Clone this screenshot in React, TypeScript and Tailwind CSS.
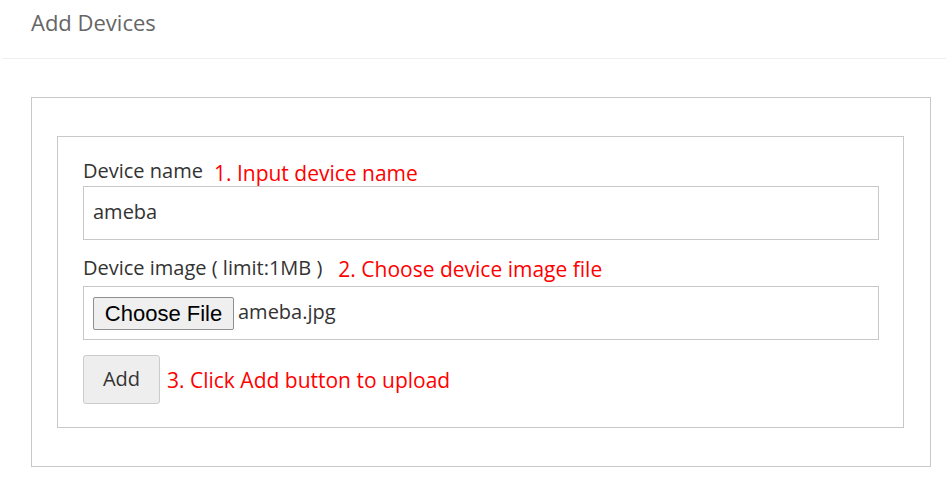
import React from "react";

export default function App() {
  const main = { fontFamily: "'Open Sans', 'Noto Sans', sans-serif" };
  return (
    <div className="w-[946px] h-[479px] bg-white overflow-hidden" style={main}>
      <div className="h-[59px] ml-[3px] border-b border-[#eeeeee] pl-[28px] pt-[7px]">
        <h1 className="text-[22px] leading-[30px] text-[#666666]">Add Devices</h1>
      </div>
      <div className="ml-[31px] mt-[38px] w-[900px] h-[370px] border border-[#c8c8c8] pt-[38px] pl-[25px]">
        <div className="w-[847px] h-[292px] border border-[#c8c8c8] pl-[25px] pt-[20px]">
          <div className="flex items-end h-[29px]">
            <span className="text-[20px] leading-[26px] text-[#333333] -translate-y-[2px]">Device name</span>
            <span className="ml-[11px] text-[21px] leading-[26px] text-[#ff0000]">1. Input device name</span>
          </div>
          <div className="w-[796px] h-[54px] border border-[#c8c8c8] flex items-center pl-[9px]">
            <span className="text-[20px] text-[#333333] -translate-y-[1px]">ameba</span>
          </div>
          <div className="flex items-end h-[46px] pb-[4px]">
            <span className="text-[20px] leading-[26px] text-[#333333] -translate-y-[1px]">Device image ( limit:1MB )</span>
            <span className="ml-[16px] text-[21px] leading-[26px] text-[#ff0000]">2. Choose device image file</span>
          </div>
          <div className="w-[796px] h-[54px] border border-[#c8c8c8] flex items-center pl-[9px]">
            <span
              className="inline-flex items-center justify-center w-[141px] h-[33px] bg-[#efefef] border border-[#8f8f8f] rounded-[2px] text-[22px] text-black"
              style={{ fontFamily: "'Liberation Sans', Arial, sans-serif" }}
            >
              Choose File
            </span>
            <span className="ml-[4px] text-[20px] text-[#333333] -translate-y-[1px]">ameba.jpg</span>
          </div>
          <div className="flex items-center mt-[15px]">
            <div className="w-[77px] h-[49px] bg-[#eeeeee] border border-[#cccccc] rounded-[3px] flex items-center justify-center text-[20px] text-[#333333]">
              <span className="-translate-y-[1px]">Add</span>
            </div>
            <span className="ml-[7px] text-[21px] text-[#ff0000] translate-y-[1px]">3. Click Add button to upload</span>
          </div>
        </div>
      </div>
    </div>
  );
}
